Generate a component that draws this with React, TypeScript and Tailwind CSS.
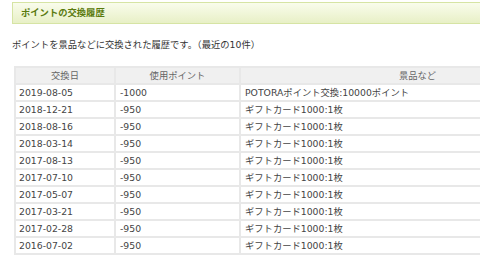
const rows = [
  { date: "2019-08-05", used: "-1000", item: "POTORAポイント交換:10000ポイント" },
  { date: "2018-12-21", used: "-950", item: "ギフトカード1000:1枚" },
  { date: "2018-08-16", used: "-950", item: "ギフトカード1000:1枚" },
  { date: "2018-03-14", used: "-950", item: "ギフトカード1000:1枚" },
  { date: "2017-08-13", used: "-950", item: "ギフトカード1000:1枚" },
  { date: "2017-07-10", used: "-950", item: "ギフトカード1000:1枚" },
  { date: "2017-05-07", used: "-950", item: "ギフトカード1000:1枚" },
  { date: "2017-03-21", used: "-950", item: "ギフトカード1000:1枚" },
  { date: "2017-02-28", used: "-950", item: "ギフトカード1000:1枚" },
  { date: "2016-07-02", used: "-950", item: "ギフトカード1000:1枚" },
];

const font = "[font-family:'DejaVu_Sans','Noto_Sans_CJK_JP',sans-serif]";

export default function App() {
  return (
    <div className={`h-[255px] w-[480px] overflow-hidden bg-white text-[#333] ${font}`}>
      <div className="w-[620px] pl-3 pt-[2px]">
        <div className="flex h-[22px] items-center border border-[#d6e4a4] bg-gradient-to-b from-[#f9fcec] to-[#e8f0c6] pl-2">
          <h2 className="text-[9.3px] font-bold text-[#5a7a0e]">ポイントの交換履歴</h2>
        </div>
        <p className="mt-[14px] text-[9.3px] leading-[14px]">
          ポイントを景品などに交換された履歴です。（最近の10件）
        </p>
        <table className="mt-[14px] ml-[2px] w-[582px] border-separate border-spacing-[2px] bg-[#e8e8e8] text-[9.3px] leading-[15px]">
          <thead>
            <tr className="bg-[#f0f0f0] text-[#666]">
              <th className="h-[15px] w-[98px] p-0 text-center font-normal">交換日</th>
              <th className="w-[123px] p-0 text-center font-normal">使用ポイント</th>
              <th className="p-0 text-center font-normal">景品など</th>
            </tr>
          </thead>
          <tbody>
            {rows.map((r) => (
              <tr key={r.date} className="bg-white text-[#444]">
                <td className="h-[15px] p-0 pl-[3px]">{r.date}</td>
                <td className="p-0 pl-[4px]">{r.used}</td>
                <td className="p-0 pl-[4px]">{r.item}</td>
              </tr>
            ))}
          </tbody>
        </table>
      </div>
    </div>
  );
}
